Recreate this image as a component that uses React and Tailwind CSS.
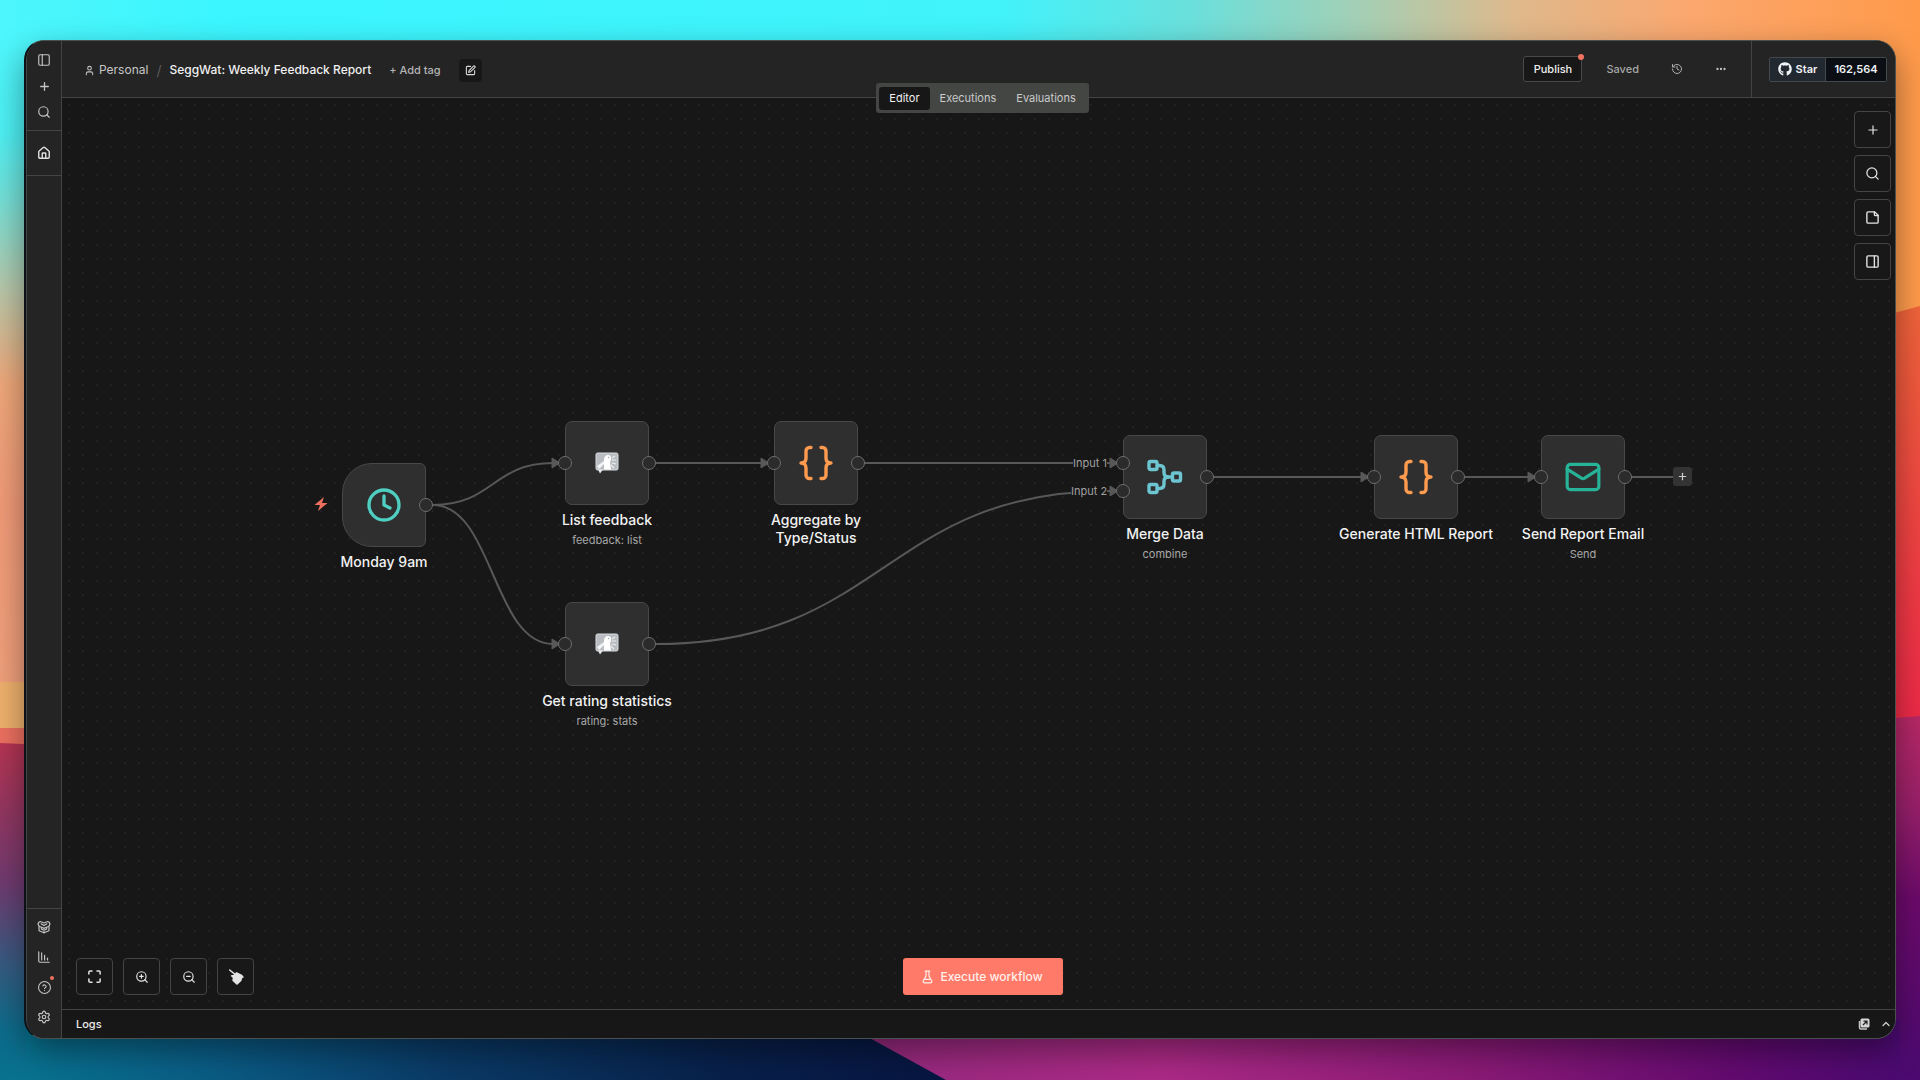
import React, { useState } from 'react';
import {
  PanelLeft,
  PanelRight,
  Plus,
  Search,
  House,
  ChartColumnDecreasing,
  Settings,
  User,
  SquarePen,
  History,
  Ellipsis,
  Maximize,
  ZoomIn,
  ZoomOut,
  ChevronUp,
  Clock,
  Mail,
} from 'lucide-react';
import { FaGithub } from 'react-icons/fa';

const TemplatesIcon = () => (
  <svg className="size-[14px]" viewBox="0 0 24 24" fill="none" stroke="currentColor" strokeWidth="2" strokeLinecap="round" strokeLinejoin="round">
    <path d="M2 7c0-3 3-5 5-4l5 2 5-2c2-1 5 1 5 4" />
    <path d="M2 7c0 2 1 3.500 2.500 4L12 14l7.500-3C21 10.500 22 9 22 7" />
    <path d="M7 6.500 12 9.500l5-3" />
    <path d="M3.500 11v7.500L12 22l8.500-3.500V11" />
    <path d="M12 14v8M7.500 12.500v3l2 1M16.500 12.500v3l-2 1" />
  </svg>
);

const HelpIcon = () => (
  <svg className="size-[13px]" viewBox="0 0 24 24" fill="none" stroke="currentColor" strokeWidth="2" strokeLinecap="round" strokeLinejoin="round">
    <circle cx="12" cy="12" r="11" />
    <path d="M9 9.2a3.100 3.100 0 0 1 6 1c0 2-3 2.600-3 3.800" />
    <path d="M12 17.500h.01" />
  </svg>
);

const NoteIcon = () => (
  <svg className="size-[15px]" viewBox="0 0 24 24" fill="none" stroke="currentColor" strokeWidth="2.2" strokeLinecap="round" strokeLinejoin="round">
    <path d="M15.500 3H5a2 2 0 0 0-2 2v14a2 2 0 0 0 2 2h14a2 2 0 0 0 2-2V8.500Z" />
    <path d="M15 3v4a2 2 0 0 0 2 2h4" />
  </svg>
);

const BroomIcon = () => (
  <svg className="size-[16px]" viewBox="0 0 24 24" fill="currentColor">
    <path d="M2.500 1.500 10.500 8" stroke="currentColor" strokeWidth="2.2" strokeLinecap="round" />
    <path d="M12.500 4.500 9 8.500 5 9.500c-1 0-1 1-.5 1.500L7 13l-.5 4.500L13.500 24l6.500-6 1.500-4.500 2.500-1-3-4z" />
  </svg>
);

const FlaskIcon = () => (
  <svg className="h-[14px] w-[11px]" viewBox="0 0 18 24" fill="none" stroke="currentColor" strokeWidth="2" strokeLinecap="round" strokeLinejoin="round">
    <path d="M5 2h8M6.500 2v8.500L2 18c-1.200 2 0 4 2 4h10c2 0 3.200-2 2-4l-4.500-7.500V2" />
    <path d="M4 16h10" />
  </svg>
);

const PopOutIcon = () => (
  <svg className="size-[12px]" viewBox="0 0 24 24" fill="none">
    <path d="M3 6v13a3 3 0 0 0 3 3h12" stroke="#c8c8c8" strokeWidth="3" />
    <rect x="5" y="1" width="18" height="18" rx="3" fill="#d6d6d6" />
    <path d="M10 14l7-7M11 6h7v7" stroke="#222" strokeWidth="2.5" />
  </svg>
);

const BracesIcon = () => (
  <svg className="size-[36px]" viewBox="0 0 36 36" fill="none" stroke="#ff9b4f" strokeWidth="3.4" strokeLinecap="round" strokeLinejoin="round">
    <path d="M13 2.500h-1.500a3.500 3.500 0 0 0-3.500 3.500v7c0 3-1.500 5-5 5 3.500 0 5 2 5 5v7a3.500 3.500 0 0 0 3.500 3.500H13" />
    <path d="M23 2.500h1.500a3.500 3.500 0 0 1 3.500 3.500v7c0 3 1.500 5 5 5-3.500 0-5 2-5 5v7a3.500 3.500 0 0 1-3.500 3.500H23" />
  </svg>
);

const MergeIcon = () => (
  <svg className="size-[36px]" viewBox="0 0 36 36" fill="none" stroke="#6cc5d0" strokeWidth="3.4" strokeLinejoin="round">
    <rect x="2" y="2.500" width="8" height="8" rx="1.500" />
    <rect x="2" y="25.500" width="8" height="8" rx="1.500" />
    <rect x="25.500" y="14" width="8" height="8" rx="1.500" />
    <path d="M10 6.500h2.500c3 0 4.500 1.500 4.500 4.500v2.500c0 3 1.500 4.500 4.500 4.500h4" />
    <path d="M10 29.500h2.500c3 0 4.500-1.500 4.500-4.500v-2.500c0-3 1.500-4.500 4.500-4.500" />
  </svg>
);

// Speech bubble with the pelican mark
const FeedbackIcon = () => (
  <svg className="h-[22px] w-[24px]" viewBox="0 0 24 22">
    <rect x="1" y="1" width="22" height="17" rx="1.500" fill="#b9bdc1" stroke="#d9dcdf" />
    <path d="M3 17.500h5L5 21.500z" fill="#e6e8ea" />
    <path d="M9 17.500V8c0-3 1.500-5 4-5 2 0 3 1.200 3 3v2l-1 2 1 7.500z" fill="#fff" />
    <path d="M2 14l7-5v3l-5 5z" fill="#f3f4f5" />
    <path d="M17 6l3-2M17 8h4M17 11l4 1M16 13l3 3" stroke="#eceef0" strokeWidth="1.2" />
    <circle cx="13.500" cy="5.500" r=".7" fill="#9aa0a5" />
  </svg>
);

const nodes = [
  {
    id: 'trigger',
    pos: 'left-[280px] top-[365px]',
    shape: 'rounded-l-[30px] rounded-r-[6px]',
    label: 'Monday 9am',
    icon: <Clock className="size-[36px] text-[#4fcfc2]" strokeWidth={2.2} />,
    inputs: [],
  },
  {
    id: 'list',
    pos: 'left-[503px] top-[323px]',
    label: 'List feedback',
    sub: 'feedback: list',
    icon: <FeedbackIcon />,
    inputs: ['top-[34px]'],
  },
  {
    id: 'stats',
    pos: 'left-[503px] top-[504px]',
    label: 'Get rating statistics',
    sub: 'rating: stats',
    icon: <FeedbackIcon />,
    inputs: ['top-[34px]'],
  },
  {
    id: 'aggregate',
    pos: 'left-[712px] top-[323px]',
    label: 'Aggregate by Type/Status',
    wrap: true,
    icon: <BracesIcon />,
    inputs: ['top-[34px]'],
  },
  {
    id: 'merge',
    pos: 'left-[1061px] top-[337px]',
    label: 'Merge Data',
    sub: 'combine',
    icon: <MergeIcon />,
    inputs: ['top-[20px]', 'top-[48px]'],
  },
  {
    id: 'generate',
    pos: 'left-[1312px] top-[337px]',
    label: 'Generate HTML Report',
    icon: <BracesIcon />,
    inputs: ['top-[34px]'],
  },
  {
    id: 'send',
    pos: 'left-[1479px] top-[337px]',
    label: 'Send Report Email',
    sub: 'Send',
    icon: <Mail className="size-[38px] text-[#27b398]" strokeWidth={2} />,
    inputs: ['top-[34px]'],
  },
];

const edges = [
  'M371 407C431 407 431 365 491 365',
  'M371 407C431 407 431 546 491 546',
  'M594 365H700',
  'M803 365H1049',
  'M594 546C822 546 822 393 1049 393',
  'M1152 379H1300',
  'M1403 379H1467',
  'M1570 379H1612',
];

const arrows = [
  [491, 365],
  [491, 546],
  [700, 365],
  [1049, 365],
  [1049, 393],
  [1300, 379],
  [1467, 379],
];

const tabs = ['Editor', 'Executions', 'Evaluations'];

const Handle = ({ className }) => (
  <span className={`absolute size-[14px] rounded-full border border-[#6e6e6e] bg-[#2b2b2b] ${className}`} />
);

const WorkflowNode = ({ node }) => (
  <div className={`absolute w-[84px] ${node.pos}`}>
    <div
      className={`relative flex size-[84px] items-center justify-center border border-[#484848] bg-[#2f2f2f] ${
        node.shape || 'rounded-[7px]'
      }`}
    >
      {node.icon}
      {node.inputs.map((top) => (
        <Handle key={top} className={`-left-[8px] ${top}`} />
      ))}
      <Handle className="-right-[8px] top-[34px]" />
    </div>
    <div className="mt-[6px] flex flex-col items-center text-center">
      <span
        className={`text-[14px] leading-[18px] font-medium text-[#f2f2f2] ${
          node.wrap ? 'w-[100px]' : 'whitespace-nowrap'
        }`}
      >
        {node.label}
      </span>
      {node.sub && <span className="mt-[2px] text-[11px] leading-[18px] whitespace-nowrap text-[#a8a8a8]">{node.sub}</span>}
    </div>
  </div>
);

const SideButton = ({ label, className = 'h-[26px]', children }) => (
  <button type="button" aria-label={label} className={`relative flex w-full items-center justify-center ${className}`}>
    {children}
  </button>
);

const CanvasButton = ({ label, children }) => (
  <button
    type="button"
    aria-label={label}
    className="flex size-[37px] items-center justify-center rounded-[4px] border border-[#444] bg-[#181818] text-[#e4e4e4]"
  >
    {children}
  </button>
);

const Wallpaper = () => (
  <svg className="absolute inset-0 size-full" viewBox="0 0 1920 1080" preserveAspectRatio="none" aria-hidden="true">
    <defs>
      <linearGradient id="sky" x1="0" x2="1" y1="0" y2="0">
        <stop offset="0" stopColor="#4df6fb" />
        <stop offset=".12" stopColor="#3bf6ff" />
        <stop offset=".52" stopColor="#41f3fb" />
        <stop offset=".62" stopColor="#6be0dc" />
        <stop offset=".71" stopColor="#a5cfb4" />
        <stop offset=".79" stopColor="#dfb98c" />
        <stop offset=".88" stopColor="#fba76e" />
        <stop offset="1" stopColor="#ff9a4a" />
      </linearGradient>
      <linearGradient id="left" x1="0" x2="0" y1="0" y2="1">
        <stop offset="0" stopColor="#4df6fb" />
        <stop offset=".14" stopColor="#4df0f4" />
        <stop offset=".24" stopColor="#74dfd6" />
        <stop offset=".38" stopColor="#b8c6a8" />
        <stop offset=".52" stopColor="#eea779" />
        <stop offset=".7" stopColor="#f09a78" />
        <stop offset="1" stopColor="#f0a07c" />
      </linearGradient>
      <linearGradient id="leftLow" x1="0" x2="0" y1="0" y2="1">
        <stop offset="0" stopColor="#b53452" />
        <stop offset=".18" stopColor="#96365f" />
        <stop offset=".42" stopColor="#6f3b70" />
        <stop offset=".65" stopColor="#385a80" />
        <stop offset=".85" stopColor="#0d6c8b" />
        <stop offset="1" stopColor="#08728f" />
      </linearGradient>
      <linearGradient id="right" x1="0" x2="0" y1="0" y2="1">
        <stop offset="0" stopColor="#f0643a" />
        <stop offset=".35" stopColor="#f03c44" />
        <stop offset=".7" stopColor="#ec1a4a" />
        <stop offset="1" stopColor="#e61848" />
      </linearGradient>
      <linearGradient id="rightLow" x1="0" x2="0" y1="0" y2="1">
        <stop offset="0" stopColor="#b82866" />
        <stop offset=".25" stopColor="#98206a" />
        <stop offset=".5" stopColor="#6c0a6a" />
        <stop offset="1" stopColor="#4a0a70" />
      </linearGradient>
      <linearGradient id="sea" x1="0" x2="1" y1="0" y2="0">
        <stop offset="0" stopColor="#08728f" />
        <stop offset=".2" stopColor="#0a5c85" />
        <stop offset=".45" stopColor="#0a3a66" />
        <stop offset=".75" stopColor="#08204a" />
        <stop offset="1" stopColor="#071540" />
      </linearGradient>
      <linearGradient id="magenta" x1="0" x2="1" y1="0" y2="0">
        <stop offset="0" stopColor="#93297c" />
        <stop offset=".3" stopColor="#ac2a86" />
        <stop offset=".6" stopColor="#8a1a76" />
        <stop offset=".85" stopColor="#620a70" />
        <stop offset="1" stopColor="#4a0a70" />
      </linearGradient>
    </defs>
    <rect width="1920" height="1080" fill="url(#sky)" />
    <path d="M0 40H400V700H0z" fill="url(#left)" />
    <path d="M0 682H400V730H0z" fill="#efb16d" />
    <path d="M0 728H400V750H0z" fill="#ec7060" />
    <path d="M0 743 400 760V1080H0z" fill="url(#leftLow)" />
    <path d="M1500 420 1920 306V1080H1500z" fill="url(#right)" />
    <path d="M1500 750 1920 716V1080H1500z" fill="url(#rightLow)" />
    <path d="M26 1020H960V1080H26z" fill="url(#sea)" />
    <path d="M837 1020 946 1080H1900V1020z" fill="url(#magenta)" />
  </svg>
);

const App = () => {
  const [activeTab, setActiveTab] = useState('Editor');

  return (
    <div className="relative flex min-h-screen overflow-hidden px-[24px] pt-[40px] pb-[41px] font-['Inter',sans-serif]">
      <Wallpaper />

      <div className="relative flex flex-1 overflow-hidden rounded-[20px] border border-l-2 border-[#4a4f4f] border-l-[#0c1116] bg-[#171717] shadow-[0_12px_32px_rgba(0,0,0,0.4)]">
        {/* Barra lateral */}
        <nav
          aria-label="Main"
          className="flex w-[36px] shrink-0 flex-col rounded-l-[18px] border-x border-r-[#444] border-l-[#3f4444] bg-[#242424] text-[#c4c4c4]"
        >
          <div className="border-b border-[#444] pt-[6px] pb-[5px]">
            <SideButton label="Toggle sidebar">
              <PanelLeft className="size-[14px]" />
            </SideButton>
            <SideButton label="Create">
              <Plus className="size-[13px]" strokeWidth={2.4} />
            </SideButton>
            <SideButton label="Search">
              <Search className="size-[14px]" />
            </SideButton>
          </div>
          <div className="border-b border-[#444]">
            <SideButton label="Overview" className="h-[44px] text-[#e2e2e2]">
              <House className="size-[14px]" strokeWidth={2.4} />
            </SideButton>
          </div>
          <div className="mt-auto border-t border-[#444] pt-[3px] pb-[6px]">
            <SideButton label="Templates" className="h-[30px]">
              <TemplatesIcon />
            </SideButton>
            <SideButton label="Insights" className="h-[30px]">
              <ChartColumnDecreasing className="size-[14px]" />
            </SideButton>
            <SideButton label="Help" className="h-[30px]">
              <HelpIcon />
              <span className="absolute top-[4px] right-[7px] size-[4px] rounded-full bg-[#ee6f5c]" />
            </SideButton>
            <SideButton label="Settings" className="h-[30px]">
              <Settings className="size-[14px]" />
            </SideButton>
          </div>
        </nav>

        <div className="flex min-w-0 flex-1 flex-col">
          {/* Encabezado */}
          <header className="relative flex h-[57px] shrink-0 border-b border-[#444] bg-[#242424]">
            <div className="flex flex-1 items-center pt-[2px] pl-[22px]">
              <a href="#personal" className="flex items-center gap-[4px] text-[12px] text-[#c6c6c6]">
                <User className="size-[11px]" strokeWidth={2.2} />
                Personal
              </a>
              <span className="mx-[8px] text-[14px] text-[#5a5a5a]">/</span>
              <h1 className="text-[12px] font-medium text-[#f0f0f0]">SeggWat: Weekly Feedback Report</h1>
              <button type="button" className="ml-[18px] text-[11px] font-medium text-[#b4b4b4]">
                + Add tag
              </button>
              <button
                type="button"
                aria-label="Edit description"
                className="ml-[18px] flex size-[23px] items-center justify-center rounded-[4px] bg-[#181818] text-[#d8d8d8]"
              >
                <SquarePen className="size-[11px]" strokeWidth={2.4} />
              </button>
            </div>

            <div className="flex items-center pr-[24px]">
              <button
                type="button"
                className="relative h-[26px] w-[59px] rounded-[3px] border border-[#4a4a4a] bg-[#171717] text-[11px] font-medium text-[#f0f0f0]"
              >
                Publish
                <span className="absolute -top-[3px] -right-[3px] size-[6px] rounded-full bg-[#f27260]" />
              </button>
              <span className="ml-[24px] text-[11px] font-medium text-[#a8a8a8]">Saved</span>
              <button type="button" aria-label="Version history" className="ml-[32px] text-[#b0b0b0]">
                <History className="size-[12px]" />
              </button>
              <button type="button" aria-label="More options" className="ml-[32px] text-[#c8c8c8]">
                <Ellipsis className="size-[12px]" strokeWidth={2.6} />
              </button>
            </div>

            <div className="flex items-center border-l border-[#444] pr-[8px] pl-[17px]">
              <div className="flex h-[25px] rounded-[2px] border border-[#44494e] text-[11px] font-semibold text-[#f0f3f6]">
                <a href="#star" className="flex w-[56px] items-center justify-center gap-[4px] border-r border-[#44494e] bg-[#212830]">
                  <FaGithub className="size-[14px]" />
                  Star
                </a>
                <a href="#stargazers" className="flex w-[60px] items-center justify-center bg-[#0b0f14]">
                  162,564
                </a>
              </div>
            </div>

            {/* Pestañas sobre el borde del encabezado */}
            <div className="absolute inset-x-0 -bottom-[16px] z-10 flex justify-center pl-[8px]">
              <div role="tablist" className="flex h-[30px] items-center rounded-[3px] bg-[#444644] p-[3px]">
                {tabs.map((tab) => (
                  <button
                    key={tab}
                    type="button"
                    role="tab"
                    aria-selected={activeTab === tab}
                    onClick={() => setActiveTab(tab)}
                    className={`h-[23px] rounded-[3px] px-[10px] text-[11px] ${
                      activeTab === tab ? 'bg-[#171717] text-[#f0f0f0]' : 'text-[#cacaca]'
                    }`}
                  >
                    {tab}
                  </button>
                ))}
              </div>
            </div>
          </header>

          {/* Lienzo */}
          <main className="relative flex flex-1 flex-col justify-between overflow-hidden bg-[#171717] bg-[radial-gradient(circle,#222_1px,transparent_1px)] bg-[size:14px_14px]">
            <svg className="absolute top-0 left-0 h-[911px] w-[1834px]" viewBox="0 0 1834 911" fill="none" aria-hidden="true">
              {edges.map((d) => (
                <path key={d} d={d} stroke="#585858" strokeWidth="2" />
              ))}
              {arrows.map(([x, y]) => (
                <path key={`${x}-${y}`} d={`M${x - 1} ${y - 5}l8 5-8 5z`} fill="#585858" stroke="#585858" strokeLinejoin="round" />
              ))}
            </svg>

            <svg className="absolute top-[398px] left-[252px] h-[16px] w-[14px]" viewBox="0 0 14 16" fill="#f0705f" aria-hidden="true">
              <path d="M10 1 .5 9H6l-2 6 9.500-8H8z" />
            </svg>

            {nodes.map((node) => (
              <WorkflowNode key={node.id} node={node} />
            ))}

            <span className="absolute top-[357px] left-[1011px] bg-[#171717] text-[11px] leading-[16px] text-[#a0a0a0]">Input 1</span>
            <span className="absolute top-[385px] left-[1009px] bg-[#171717] text-[11px] leading-[16px] text-[#a0a0a0]">Input 2</span>

            <button
              type="button"
              aria-label="Add node"
              className="absolute top-[369px] left-[1611px] flex size-[19px] items-center justify-center rounded-[3px] bg-[#333] text-[#d0d0d0]"
            >
              <Plus className="size-[11px]" strokeWidth={2.6} />
            </button>

            <div className="relative mt-[13px] mr-[4px] flex flex-col gap-[7px] self-end">
              <CanvasButton label="Add node">
                <Plus className="size-[14px]" />
              </CanvasButton>
              <CanvasButton label="Search nodes">
                <Search className="size-[15px]" />
              </CanvasButton>
              <CanvasButton label="Add sticky note">
                <NoteIcon />
              </CanvasButton>
              <CanvasButton label="Toggle panel">
                <PanelRight className="size-[15px]" strokeWidth={2.2} />
              </CanvasButton>
            </div>

            <div className="relative grid grid-cols-[1fr_auto_1fr] pb-[14px] pl-[8px]">
              <div className="flex gap-[10px] pl-[6px]">
                <CanvasButton label="Fit view">
                  <Maximize className="size-[15px]" strokeWidth={2.4} />
                </CanvasButton>
                <CanvasButton label="Zoom in">
                  <ZoomIn className="size-[14px]" />
                </CanvasButton>
                <CanvasButton label="Zoom out">
                  <ZoomOut className="size-[14px]" />
                </CanvasButton>
                <CanvasButton label="Tidy up">
                  <BroomIcon />
                </CanvasButton>
              </div>
              <button
                type="button"
                className="flex h-[37px] w-[160px] items-center justify-center gap-[7px] rounded-[3px] bg-[#ff7a68] text-[12px] font-medium text-[#fff0ec]"
              >
                <FlaskIcon />
                Execute workflow
              </button>
            </div>
          </main>

          {/* Registros */}
          <footer className="flex h-[29px] shrink-0 items-center border-t border-[#444] bg-[#171717] pr-[3px] pl-[14px]">
            <span className="flex-1 text-[11px] font-medium text-[#ececec]">Logs</span>
            <button type="button" aria-label="Pop out logs" className="mr-[10px]">
              <PopOutIcon />
            </button>
            <button type="button" aria-label="Open logs" className="text-[#d0d0d0]">
              <ChevronUp className="size-[12px]" strokeWidth={2.4} />
            </button>
          </footer>
        </div>
      </div>
    </div>
  );
};

export default App;
